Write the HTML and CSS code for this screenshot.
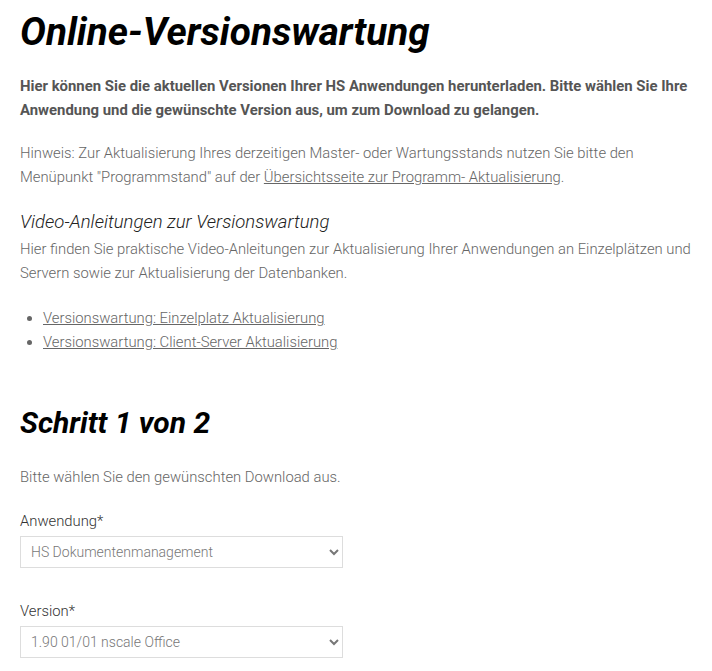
FILE: index.html
```html
<!DOCTYPE html>
<html lang="de">
<head>
<meta charset="utf-8">
<title>Online-Versionswartung</title>
<link rel="stylesheet" href="styles.css">
</head>
<body>
<main class="page">
  <h1 class="title">Online-Versionswartung</h1>
  <p class="lead">Hier können Sie die aktuellen Versionen Ihrer HS Anwendungen herunterladen. Bitte wählen Sie Ihre Anwendung und die gewünschte Version aus, um zum Download zu gelangen.</p>
  <p class="text">Hinweis: Zur Aktualisierung Ihres derzeitigen Master- oder Wartungsstands nutzen Sie bitte den Menüpunkt "Programmstand" auf der <a href="#">Übersichtsseite zur Programm- Aktualisierung</a>.</p>
  <h3 class="subtitle">Video-Anleitungen zur Versionswartung</h3>
  <p class="text">Hier finden Sie praktische Video-Anleitungen zur Aktualisierung Ihrer Anwendungen an Einzelplätzen und Servern sowie zur Aktualisierung der Datenbanken.</p>
  <ul class="links">
    <li><a href="#">Versionswartung: Einzelplatz Aktualisierung</a></li>
    <li><a href="#">Versionswartung: Client-Server Aktualisierung</a></li>
  </ul>
  <h2 class="step">Schritt 1 von 2</h2>
  <p class="text">Bitte wählen Sie den gewünschten Download aus.</p>
  <div class="field">
    <label class="label" for="app">Anwendung*</label>
    <select id="app" class="select"><option>HS Dokumentenmanagement</option></select>
  </div>
  <div class="field">
    <label class="label" for="ver">Version*</label>
    <select id="ver" class="select"><option>1.90 01/01 nscale Office</option></select>
  </div>
</main>
</body>
</html>
```
FILE: styles.css
```css
html, body {
  margin: 0;
  padding: 0;
  background: #fff;
}
body {
  font-family: Roboto, "Liberation Sans", sans-serif;
  font-size: 14.8px;
  line-height: 24px;
  color: #666;
  font-weight: 300;
}
.page {
  padding: 8px 20px 0 20px;
}
.title {
  margin: 0;
  font-size: 38.7px;
  line-height: 48px;
  font-style: italic;
  font-weight: 700;
  color: #000;
}
.lead {
  margin: 18px 0 0;
  font-size: 14.9px;
  font-weight: 700;
  color: #555;
}
.text {
  margin: 19px 0 0;
}
a {
  color: #666;
  text-decoration: underline;
}
.subtitle {
  margin: 21px 0 0;
  font-size: 18.5px;
  line-height: 24px;
  font-style: italic;
  font-weight: 300;
  color: #222;
}
.subtitle + .text {
  margin-top: 3px;
}
.links {
  margin: 21px 0 0;
  padding-left: 23px;
}
.step {
  margin: 49px 0 0;
  font-size: 30px;
  line-height: 40px;
  font-style: italic;
  font-weight: 700;
  color: #000;
}
.step + .text {
  margin-top: 22px;
}
.field {
  display: flex;
  flex-direction: column;
  align-items: flex-start;
  margin-top: 20px;
}
.field + .field {
  margin-top: 31px;
}
.label {
  color: #333;
  font-weight: 300;
}
.select {
  margin-top: 3px;
  width: 323px;
  height: 32px;
  border: 1px solid #ddd;
  border-radius: 0;
  background: #fff;
  font-family: Roboto, "Liberation Sans", sans-serif;
  font-size: 14px;
  font-weight: 300;
  color: #777;
  padding: 0 6px;
}
```
